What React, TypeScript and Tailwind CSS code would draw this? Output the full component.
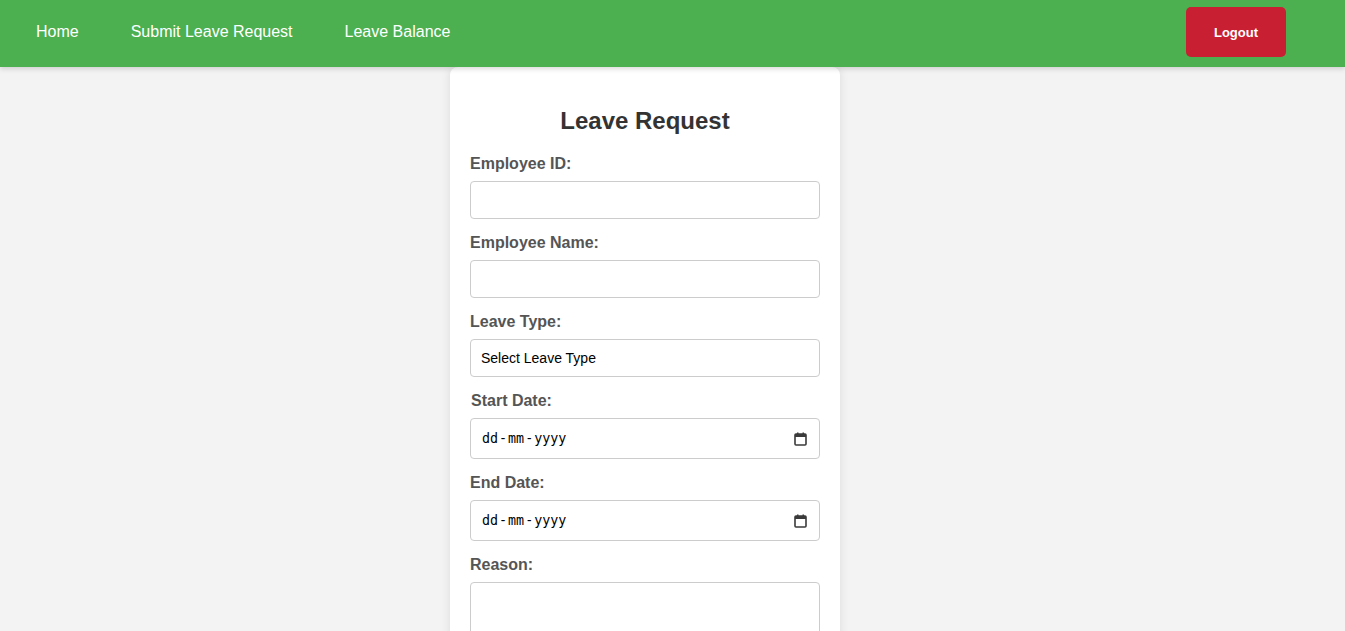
import React from "react";

function CalendarIcon() {
  return (
    <svg width="13" height="14" viewBox="0 0 13 14" className="shrink-0">
      <rect x="1" y="2" width="11" height="11" rx="1" fill="none" stroke="#3a3a3a" strokeWidth="1.6" />
      <rect x="1" y="2" width="11" height="3" fill="#3a3a3a" />
      <rect x="3" y="0.5" width="1.5" height="2.5" fill="#3a3a3a" />
      <rect x="8.5" y="0.5" width="1.5" height="2.5" fill="#3a3a3a" />
    </svg>
  );
}

function Label({ children, className = "" }: { children: React.ReactNode; className?: string }) {
  return (
    <label className={`block text-[16px] leading-[18px] font-bold text-[#555] pt-px mb-[8px] ${className}`}>
      {children}
    </label>
  );
}

function DateField() {
  return (
    <div className="h-[41px] w-full border border-[#ccc] rounded-[4px] bg-white flex items-center justify-between pl-[11px] pr-[12px] mb-[14px]">
      <span className="text-[13.33px] text-black flex items-center" style={{ fontFamily: '"DejaVu Sans Mono", "Liberation Mono", monospace' }}>
        <span>dd</span>
        <span className="px-px">-</span>
        <span>mm</span>
        <span className="px-px">-</span>
        <span>yyyy</span>
      </span>
      <CalendarIcon />
    </div>
  );
}

export default function App() {
  return (
    <div className="h-[631px] bg-[#f3f3f3] overflow-hidden" style={{ fontFamily: '"Liberation Sans", Arial, sans-serif' }}>
      <header className="h-[67px] bg-[#4caf50] flex items-center justify-between pl-4 pr-[59px] shadow-[0_2px_5px_rgba(0,0,0,0.15)] relative z-10">
        <nav className="flex items-center gap-3 -mt-[4px]">
          <a className="px-5 text-white text-[16px]">Home</a>
          <a className="px-5 text-white text-[16px]">Submit Leave Request</a>
          <a className="px-5 text-white text-[16px]">Leave Balance</a>
        </nav>
        <button className="w-[100px] h-[50px] bg-[#c82032] text-white text-[13px] font-bold rounded-[5px] -mt-[3px] pt-[2px]">
          Logout
        </button>
      </header>
      <main className="flex justify-center pr-[55px]">
        <div className="w-[390px] bg-white rounded-[8px] shadow-[0_0_10px_rgba(0,0,0,0.1)] px-5 pt-[40px] pb-5 h-[600px]">
          <h2 className="text-[24px] leading-[28px] font-bold text-[#333] text-center mb-[19px]">Leave Request</h2>
          <Label>Employee ID:</Label>
          <input className="block w-full h-[38px] border border-[#ccc] rounded-[4px] mb-[14px] outline-none" />
          <Label>Employee Name:</Label>
          <input className="block w-full h-[38px] border border-[#ccc] rounded-[4px] mb-[14px] outline-none" />
          <Label>Leave Type:</Label>
          <div className="w-full h-[38px] border border-[#ccc] rounded-[4px] mb-[14px] flex items-center pl-[10px] text-[14px] text-black">
            Select Leave Type
          </div>
          <Label className="pl-px">Start Date:</Label>
          <DateField />
          <Label>End Date:</Label>
          <DateField />
          <Label>Reason:</Label>
          <textarea className="block w-full h-[80px] border border-[#ccc] rounded-[4px] outline-none resize-none" />
        </div>
      </main>
    </div>
  );
}
